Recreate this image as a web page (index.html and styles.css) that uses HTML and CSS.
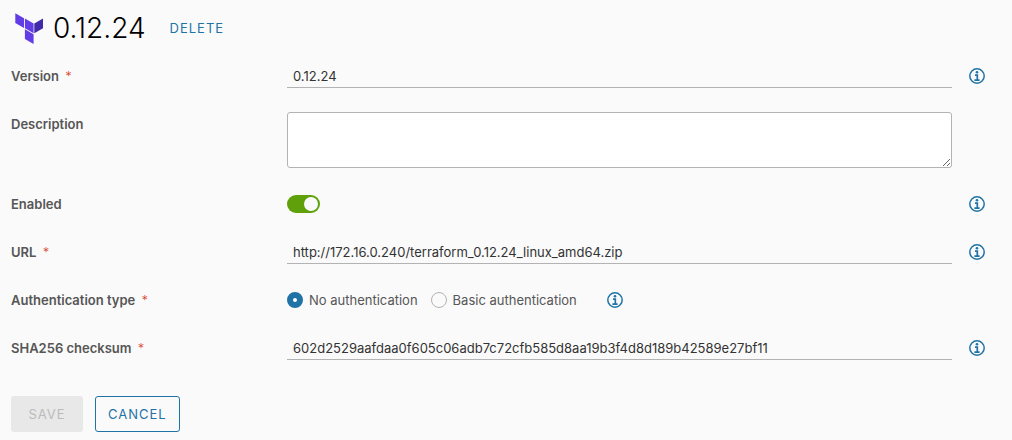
FILE: index.html
```html
<!DOCTYPE html>
<html lang="en">

<head>
    <meta charset="UTF-8">
    <meta name="viewport" content="width=device-width, initial-scale=1.0">
    <title>0.12.24</title>
    <link rel="stylesheet" href="styles.css">
</head>

<body>
    <svg class="sprite" aria-hidden="true">
        <symbol id="info" viewBox="0 0 16 16">
            <circle cx="8" cy="8" r="7.2" fill="none" stroke="currentColor" stroke-width="1.5" />
            <circle cx="8" cy="4.2" r="1.3" fill="currentColor" />
            <path d="M6 7.1h2.3v5M5.4 12.1h5.2" fill="none" stroke="currentColor" stroke-width="1.7" />
        </symbol>
    </svg>

    <header class="page_header">
        <svg class="logo" viewBox="0 0 28 31" aria-hidden="true">
            <path fill="#623ce4" d="M0.3 0.3L9 5.2V14.9L0.3 10zM9.9 5.6L18.6 10.5V20.2L9.9 15.3zM9.9 16.3L18.6 21.2V30.9L9.9 26z" />
            <path fill="#402aa8" d="M19.3 10.5L28 5.6V15.3L19.3 20.2z" />
        </svg>
        <h1>0.12.24</h1>
        <button type="button" class="btn_link">Delete</button>
    </header>

    <form class="version_form">
        <div class="row">
            <label class="name" for="version">Version <span class="required">*</span></label>
            <input type="text" class="text" id="version" value="0.12.24" required>
            <button type="button" class="info" aria-label="About version"><svg><use href="#info" /></svg></button>
        </div>

        <div class="row">
            <label class="name" for="description">Description</label>
            <textarea id="description"></textarea>
        </div>

        <div class="row">
            <label class="name" for="enabled">Enabled</label>
            <input type="checkbox" class="toggle" id="enabled" checked>
            <button type="button" class="info" aria-label="About enabled"><svg><use href="#info" /></svg></button>
        </div>

        <div class="row">
            <label class="name" for="url">URL <span class="required">*</span></label>
            <input type="text" class="text" id="url" value="http://172.16.0.240/terraform_0.12.24_linux_amd64.zip" required>
            <button type="button" class="info" aria-label="About URL"><svg><use href="#info" /></svg></button>
        </div>

        <div class="row" role="radiogroup" aria-labelledby="auth_name">
            <span class="name" id="auth_name">Authentication type <span class="required">*</span></span>
            <div class="options">
                <label><input type="radio" name="auth" checked>No authentication</label>
                <label><input type="radio" name="auth">Basic authentication</label>
                <button type="button" class="info" aria-label="About authentication type"><svg><use href="#info" /></svg></button>
            </div>
        </div>

        <div class="row">
            <label class="name" for="checksum">SHA256 checksum <span class="required">*</span></label>
            <input type="text" class="text" id="checksum" value="602d2529aafdaa0f605c06adb7c72cfb585d8aa19b3f4d8d189b42589e27bf11" required>
            <button type="button" class="info" aria-label="About SHA256 checksum"><svg><use href="#info" /></svg></button>
        </div>

        <div class="actions">
            <button type="submit" class="btn" disabled>Save</button>
            <button type="button" class="btn btn_outline">Cancel</button>
        </div>
    </form>
</body>

</html>
```

FILE: styles.css
```css
* {
    margin: 0;
    padding: 0;
    box-sizing: border-box;
}

body {
    padding: 8px 27px 8px 11px;
    background-color: #fafafa;
    color: #565656;
    font-family: Inter, "Liberation Sans", sans-serif;
    font-size: 13px;
    line-height: 24px;
}

input,
textarea,
button {
    font: inherit;
    color: inherit;
}

button {
    border: 0;
    background: none;
    cursor: pointer;
}

.sprite {
    display: none;
}

/* header */
.page_header {
    display: flex;
    align-items: center;
    height: 40px;
    padding-left: 4px;
}

.logo {
    width: 28px;
    height: 31px;
    margin-right: 10px;
}

h1 {
    color: #000;
    font-size: 28px;
    font-weight: 300;
    line-height: 40px;
}

.btn_link,
.btn {
    letter-spacing: 1px;
    text-transform: uppercase;
}

.btn_link {
    margin-left: 24px;
    color: #1f73a7;
}

/* form */
.version_form {
    display: flex;
    flex-direction: column;
    gap: 24px;
    padding-top: 16px;
}

.row {
    display: grid;
    grid-template-columns: 259px minmax(0, 1fr) 16px;
    column-gap: 17px;
}

.name {
    font-weight: 600;
}

.required {
    margin-left: 3px;
    color: #d9432b;
    font-weight: 300;
}

.text {
    width: 100%;
    height: 24px;
    padding: 0 6px;
    border: 0;
    border-bottom: 1px solid #b3b3b3;
    background: none;
    color: #333;
}

textarea {
    display: block;
    width: 100%;
    height: 56px;
    padding: 4px 6px;
    border: 1px solid #b3b3b3;
    border-radius: 3px;
    background-color: #fff;
    resize: vertical;
}

.info {
    width: 16px;
    height: 24px;
    color: #1f73a7;
}

.info svg {
    display: block;
    width: 16px;
    height: 16px;
}

.toggle {
    appearance: none;
    display: flex;
    justify-content: flex-start;
    align-self: center;
    width: 33px;
    height: 18px;
    padding: 2px;
    border-radius: 9px;
    background-color: #737373;
}

.toggle::before {
    content: "";
    width: 14px;
    height: 14px;
    border-radius: 50%;
    background-color: #fafafa;
}

.toggle:checked {
    justify-content: flex-end;
    background-color: #60a10b;
}

.options {
    display: flex;
}

.options label {
    display: flex;
    align-items: center;
    gap: 6px;
    margin-right: 13px;
}

.options .info {
    margin-left: 17px;
}

.options input {
    appearance: none;
    width: 16px;
    height: 16px;
    border: 1px solid #b3b3b3;
    border-radius: 50%;
}

.options input:checked {
    border: 6px solid #1f73a7;
    background-color: #fff;
}

/* buttons */
.actions {
    display: flex;
    gap: 12px;
    padding-top: 12px;
}

.btn {
    min-width: 72px;
    height: 36px;
    padding: 0 12px;
    border-radius: 3px;
}

.btn:disabled {
    background-color: #e8e8e8;
    color: #bbb;
    cursor: default;
}

.btn_outline {
    border: 1px solid #1f73a7;
    color: #1f73a7;
}
```
